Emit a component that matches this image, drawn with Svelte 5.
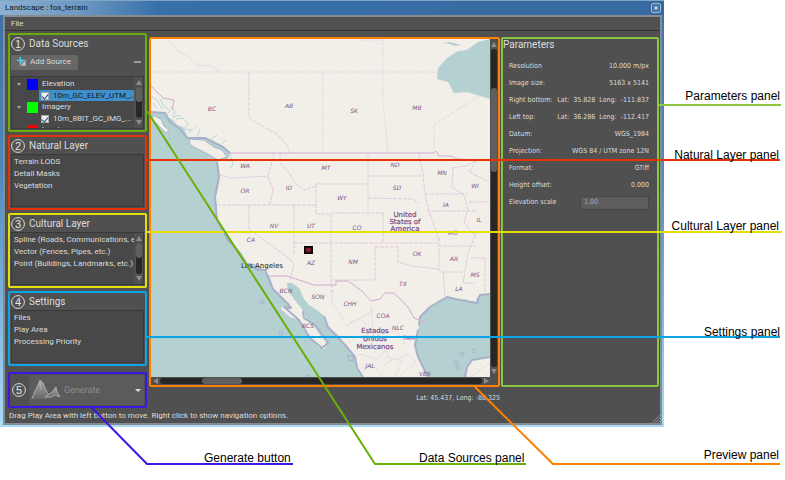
<script lang="ts">
    let selected = $state("10m_GC_ELEV_UTM_...");
    let elevationScale = $state("1.00");

    let sources = $state([
        { name: "Elevation", kind: "elevation", file: "10m_GC_ELEV_UTM_...", enabled: true },
        { name: "Imagery", kind: "imagery", file: "10m_8BIT_GC_IMG_...", enabled: true },
        { name: "Landcover", kind: "landcover", file: "", enabled: false },
    ]);

    const layers = [
        { no: 2, title: "Natural Layer", kind: "natural", items: ["Terrain LODS", "Detail Masks", "Vegetation"] },
        {
            no: 3,
            title: "Cultural Layer",
            kind: "cultural",
            items: ["Spline (Roads, Communications, etc.)", "Vector (Fences, Pipes, etc.)", "Point (Buildings, Landmarks, etc.)"],
        },
        { no: 4, title: "Settings", kind: "settings", items: ["Files", "Play Area", "Processing Priority"] },
    ];

    const parameters = [
        ["Resolution", "10.000 m/px"],
        ["Image size:", "5163 x 5141"],
        ["Right bottom:", "Lat:  35.828  Long:  -111.837"],
        ["Left top:", "Lat:  36.286  Long:  -112.417"],
        ["Datum:", "WGS_1984"],
        ["Projection:", "WGS 84 / UTM zone 12N"],
        ["Format:", "GTiff"],
        ["Height offset:", "0.000"],
    ];

    const states: [string, number, number][] = [
        ["BC", 212, 111], ["AB", 289, 108], ["SK", 354, 113], ["MB", 417, 110],
        ["WA", 245, 168], ["OR", 245, 193], ["ID", 289, 190], ["MT", 326, 170],
        ["ND", 395, 167], ["SD", 397, 190], ["WY", 342, 200], ["MN", 442, 175],
        ["WI", 475, 188], ["IA", 446, 207], ["IL", 479, 222], ["MO", 453, 235],
        ["NV", 274, 228], ["UT", 311, 228], ["CA", 251, 242], ["CO", 357, 230],
        ["AZ", 311, 265], ["NM", 353, 264], ["OK", 417, 256], ["AR", 454, 261],
        ["TX", 403, 286], ["MS", 475, 277], ["LA", 459, 291], ["BCN", 286, 293],
        ["SON", 318, 299], ["BCS", 308, 328], ["CHH", 350, 306], ["COA", 383, 318],
        ["NLC", 398, 330], ["TAM", 409, 340], ["JAL", 370, 368], ["VER", 425, 376],
    ];

    // offsets in px from the right edge (or the left one) and from the top of the figure
    const callouts = [
        { text: "Parameters panel", side: "right", x: 5, y: 88 },
        { text: "Natural Layer panel", side: "right", x: 6, y: 147 },
        { text: "Cultural Layer panel", side: "right", x: 6, y: 218 },
        { text: "Settings panel", side: "right", x: 5, y: 324 },
        { text: "Preview panel", side: "right", x: 6, y: 447 },
        { text: "Data Sources panel", side: "left", x: 419, y: 450 },
        { text: "Generate button", side: "left", x: 204, y: 450 },
    ];
</script>

{#snippet badge(no: number)}
    <svg class="badge" viewBox="0 0 14 14" aria-hidden="true">
        <circle cx="7" cy="7" r="6.4" />
        <text x="7" y="11">{no}</text>
    </svg>
{/snippet}

{#snippet scrollbar(kind: string)}
    <div class="scrollbar {kind}" aria-hidden="true">
        <i class="arrow back"></i>
        <div class="track"><div class="thumb"></div></div>
        <i class="arrow forward"></i>
    </div>
{/snippet}

<div class="figure">
    <div class="window">
        <header class="titlebar">
            <span class="title">Landscape : fox_terrain</span>
            <button class="close" aria-label="Close">
                <svg viewBox="0 0 8 8"><path d="M2.5 2.5l3 3M5.5 2.5l-3 3" /></svg>
            </button>
        </header>

        <div class="client">
            <nav class="menubar"><button>File</button></nav>

            <main class="main">
                <div class="sidebar">
                    <section class="panel sources">
                        <h2>{@render badge(1)}Data Sources</h2>
                        <div class="toolbar">
                            <button class="add">
                                <svg viewBox="0 0 12 12" aria-hidden="true">
                                    <path d="M3 3h8v8H3z" fill="#8b9296" />
                                    <path d="M5 10l5-5v5z" fill="#c4c8ca" />
                                    <path d="M4 0v8M0 4h8" stroke="#4fd0f5" stroke-width="1.6" />
                                </svg>
                                Add Source
                            </button>
                            <button class="collapse" aria-label="Collapse all"></button>
                        </div>
                        <div class="list">
                            <div class="tree">
                                {#each sources as source}
                                    <div class="group"><i class="twisty"></i><i class="swatch {source.kind}"></i>{source.name}</div>
                                    {#if source.file}
                                        <label class="file" class:selected={source.file === selected}>
                                            <input type="checkbox" bind:checked={source.enabled} />
                                            {source.file}
                                        </label>
                                    {/if}
                                {/each}
                            </div>
                            {@render scrollbar("vertical")}
                        </div>
                    </section>

                    {#each layers as layer}
                        <section class="panel {layer.kind}">
                            <h2>{@render badge(layer.no)}{layer.title}</h2>
                            <div class="list">
                                <ul>
                                    {#each layer.items as item}
                                        <li>{item}</li>
                                    {/each}
                                </ul>
                                {#if layer.kind === "cultural"}
                                    {@render scrollbar("vertical")}
                                {/if}
                            </div>
                        </section>
                    {/each}

                    <section class="panel run">
                        {@render badge(5)}
                        <button class="generate">
                            <svg viewBox="0 0 30 22" aria-hidden="true">
                                <defs>
                                    <linearGradient id="rock" x2="0" y2="1">
                                        <stop offset="0" stop-color="#aaa" />
                                        <stop offset="1" stop-color="#666" />
                                    </linearGradient>
                                </defs>
                                <path d="M1 20L4 12 6 8 9 1 12 4 14 9 16 13 19 18 15 20z" fill="url(#rock)" />
                                <path d="M1 20L4 12 6 8 9 1 12 4 14 9 16 13 19 18M9 2l1 6-1 3" fill="none" stroke="#aaa" />
                                <path d="M14 18L17 16 20 14 22 12 25 8 26 13 29 18 24 16 20 18z" fill="url(#rock)" stroke="#aaa" />
                            </svg>
                            Generate
                            <i class="caret"></i>
                        </button>
                    </section>
                </div>

                <div class="center">
                    <section class="preview" aria-label="Preview">
                        <svg class="map" viewBox="151 39 339 338" preserveAspectRatio="xMidYMid slice">
                            <g class="water">
                                <path d="M151 112L165 113 168 117 173 120 177 125 183 127 188 137 205 138 214 142 223 147 230 153 228 159 217 162 219 177 218 188 215 197 217 207 217 220 220 227 225 233 228 240 240 253 245 262 255 264 263 268 270 277 273 289 280 297 289 303 292 308 287 310 282 306 281 309 290 317 299 320 304 329 310 337 318 347 324 349 328 344 320 335 314 326 307 320 302 309 294 299 288 291 287 283 292 283 299 288 304 299 309 305 317 310 324 316 328 327 338 335 346 346 355 357 357 368 363 377 151 377z" />
                                <path d="M419 325L420 317 430 307 440 300 447 297 460 300 466 299 468 302 477 303 476 299 480 295 490 294 490 357 472 360 467 367 465 377 428 377 424 370 418 357 415 345 417 335z" />
                            </g>
                            <path class="shelf" d="M151 112L165 113 170 122 180 129 187 138 205 138 223 147 230 153M217 162L219 177 215 197 217 220 228 240 240 253 247 264 258 270 265 270 273 289 287 303 291 308 284 307 299 320 310 338 322 348 328 343 316 326 304 318 303 311M324 316L328 327 346 346 355 357 357 368 363 377M419 325L420 317 430 307 447 297 460 300 477 303 480 295 490 294M490 357L472 360 467 367 465 377M428 377L418 357 415 345 418 330" />
                            <path class="bay" d="M490 39L478 42 467 50 458 51 447 58 438 68 437 79 448 82 454 93 467 92 480 96 490 99z" />
                            <path class="bay" d="M443 43l7-1 11 3-6 1-5-2z" />
                            <path class="island" d="M189 139L204 140 214 147 222 150 227 157 218 160 208 154 190 145z" />
                            <path class="island" d="M152 115L161 119 164 126 169 130 166 133 153 120z" />
                            <path class="fjords" d="M151 96l6 4 5 9M160 99l4 7 6 5-3 3M170 106l5 5-2 6 8-2M176 119l7-1 5 6-4 5 8 1M153 103l4 5M188 133l8-6M197 137l3-8M210 140l7-5M220 145l6-5M230 154l3 10-3 4" />
                            <g class="coastline">
                                <circle cx="262" cy="302" r="2" /><circle cx="281" cy="333" r="2" />
                                <circle cx="474" cy="351" r="2" /><circle cx="462" cy="354" r="2" />
                                <circle cx="456" cy="363" r="2" /><circle cx="458" cy="368" r="2" />
                                <circle cx="308" cy="377" r="2" /><path d="M347 355l5 1 2 5-5-1z" />
                            </g>
                            <path class="borders faint" d="M151 72H437M167 40l6 5 5 6 10 5 9 9 15 1 8 6M323 72V153M360 40H383V103L388 153M434 125L479 96M434 125V153" />
                            <path class="borders" d="M249 72V118L262 126 277 134 287 145 290 153M219 175l12 3 37-2 6-22M268 177l5 12-3 16M280 153v10l10 11 5 9 9 7 12-4M217 205H316M316 184v30h15V293M316 184h52M368 154v57M331 213h52M368 176h53M368 198l45 1 6 5M419 154l4 20 2 20 4 17 5 14 5 15M425 194h42M427 211h50M383 213v29M249 205v24l42 31 3 6-4 14M294 205v50M294 243H438M375 247v33H332M375 247h23v15l14 4 27 3M439 238v32l4 2 2 25M443 272h20M438 246h38M477 231l-9 22-5 30h12M471 258h15M485 258v35M453 168l13-2 9-5M453 168l-1 19 12 8 4 15-4 12 11 14M477 160l-8 12 20 10M469 202h21" />
                            <path class="borders faint" d="M333 284l-1 19 12 17M346 326l28-16M371 304l2 25-10 14M350 322l10-3 10 10 13 4 14-2 8 14M367 345l10-5 11 10M359 354l18 5 8-9 7 11-10 5M363 368l10-3 10 12M385 357l17 4-7 16M397 360l11-6 10 12M402 373l12-8M470 377l20-14" />
                            <path class="national" d="M228 153H434L436 151 439 156 450 156 458 159 478 160M151 86l12 12 11 2-2 10M270 276h17l27 9h22v-4h12l14 10 9 10 9-2 5-6h9l14 14 6 11 13 5" />

                            <g class="states">
                                {#each states as [name, x, y]}
                                    <text {x} {y}>{name}</text>
                                {/each}
                            </g>
                            <g class="countries">
                                <text x="405" y="217">United</text>
                                <text x="405" y="224">States of</text>
                                <text x="405" y="231">America</text>
                                <text x="375" y="333">Estados</text>
                                <text x="375" y="341">Unidos</text>
                                <text x="375" y="349">Mexicanos</text>
                            </g>
                            <text class="city" x="262" y="268">Los Angeles</text>
                            <rect class="play-area" x="305" y="247" width="7" height="6" />
                            <rect class="play-grid" x="306" y="248" width="5" height="4" />
                        </svg>
                        {@render scrollbar("vertical tall")}
                        {@render scrollbar("horizontal")}
                    </section>
                    <p class="coords">Lat: 45.437, Long: -88.325</p>
                </div>

                <section class="params">
                    <h2>Parameters</h2>
                    <dl>
                        {#each parameters as [name, value]}
                            <div><dt>{name}</dt><dd>{value}</dd></div>
                        {/each}
                    </dl>
                    <label class="scale">
                        Elevation scale
                        <input type="text" bind:value={elevationScale} />
                    </label>
                </section>
            </main>

            <footer class="status">
                Drag Play Area with left button to move. Right click to show navigation options.
                <svg class="grip" viewBox="0 0 8 8" aria-hidden="true"><path d="M0 8L8 0M3 8l5-5M6 8l2-2" /></svg>
            </footer>
        </div>
    </div>

    <svg class="leaders" viewBox="0 0 785 480" preserveAspectRatio="none" aria-hidden="true">
        <path class="parameters" d="M658 105H781" />
        <path class="natural" d="M147 160H780" />
        <path class="cultural" d="M147 232H782" />
        <path class="settings" d="M147 337H780" />
        <path class="preview-line" d="M475 387L553 464H780" />
        <path class="sources" d="M147 111L375 464H526" />
        <path class="run-line" d="M92 408L147 464H293" />
    </svg>
    {#each callouts as callout}
        <span class="callout" style="{callout.side}: {callout.x}px; top: {callout.y}px">{callout.text}</span>
    {/each}
</div>

<style>
    :global(body) {
        background: #fff;
    }

    .figure {
        position: relative;
        padding: 0 121px 53px 0;
        font: 8px/12px Roboto, "Open Sans", sans-serif;
        color: #ddd;
    }

    .figure * {
        box-sizing: border-box;
    }

    button {
        padding: 0;
        border: 0;
        background: none;
        font: inherit;
        color: inherit;
    }

    .window {
        padding: 0 2px 2px 3px;
        background: linear-gradient(#3d70a6, #4e88bd 40%, #a9dcf8);
    }

    .titlebar {
        display: flex;
        align-items: center;
        justify-content: space-between;
        height: 15px;
        background: linear-gradient(90deg, #8cb0d0, #6c98c2 80px, #376fa8 160px, #376aa0);
        border-top: 1px solid #7fa6c9;
        margin: 0 -2px 0 -3px;
        padding: 0 3px 0 5px;
    }

    .title {
        color: #101820;
    }

    .close {
        display: grid;
        place-items: center;
        width: 10px;
        height: 10px;
        border: 1px solid #9dbbd6;
        border-radius: 2px;
        background: #4a76a5;
    }

    .close svg {
        width: 8px;
        height: 8px;
        stroke: #fff;
    }

    .client {
        border: 2px solid #858c92;
        background: #505050;
    }

    .menubar {
        height: 14px;
        padding-left: 6px;
        border-bottom: 1px solid #333;
        display: flex;
        align-items: center;
    }

    .main {
        display: grid;
        grid-template-columns: 139px 1fr 158px;
        padding: 2px 1px 0 3px;
    }

    .sidebar {
        display: flex;
        flex-direction: column;
        gap: 3px;
    }

    .panel {
        border: 2px solid var(--accent);
        border-radius: 2px;
        padding: 1px;
    }

    .sources {
        --accent: #6aaf08;
    }

    .natural {
        --accent: #e63206;
    }

    .cultural {
        --accent: #e5df05;
    }

    .settings {
        --accent: #0ba4e6;
    }

    .run,
    .run-line {
        --accent: #3b18ea;
    }

    .parameters {
        --accent: #8cc63f;
    }

    .preview-line {
        --accent: #ff7f00;
    }

    h2 {
        display: flex;
        align-items: center;
        gap: 4px;
        height: 16px;
        margin: 0;
        font-size: 10px;
        font-weight: 400;
    }

    .badge {
        flex: none;
        width: 14px;
        height: 14px;
        font: 11px "Liberation Sans", sans-serif;
        text-anchor: middle;
        fill: #e6e6e6;
    }

    .badge circle {
        fill: none;
        stroke: #ddd;
    }

    .toolbar {
        display: flex;
        align-items: center;
        justify-content: space-between;
        height: 20px;
        margin-bottom: 4px;
        padding-right: 3px;
    }

    .add {
        display: flex;
        align-items: center;
        gap: 3px;
        height: 15px;
        padding: 0 7px 0 6px;
        border-radius: 1px;
        background: #676767;
    }

    .add svg {
        width: 10px;
        height: 10px;
    }

    .collapse {
        width: 7px;
        height: 2px;
        background: #999;
    }

    .list {
        display: flex;
        height: 53px;
        border: 1px solid #393939;
        background: #484848;
        overflow: hidden;
    }

    .tree,
    ul {
        flex: 1;
        min-width: 0;
        margin: 0;
        padding: 1px 0 0;
        overflow: hidden;
        white-space: nowrap;
        list-style: none;
    }

    ul {
        padding-left: 2px;
    }

    .group,
    .file {
        display: flex;
        align-items: center;
        height: 12px;
    }

    .file {
        height: 11px;
        margin-left: 27px;
        padding-left: 2px;
        gap: 4px;
    }

    .selected {
        background: #3f8fcb;
        color: #101820;
    }

    .file input {
        appearance: none;
        width: 8px;
        height: 8px;
        margin: 0;
        background: #eee;
        border: 1px solid #aaa;
    }

    .file input:checked::after {
        content: "";
        display: block;
        width: 3px;
        height: 5px;
        margin: 0 1px;
        border: solid #25476d;
        border-width: 0 1px 1px 0;
        transform: rotate(40deg);
    }

    .twisty,
    .caret {
        border: 3px solid transparent;
        border-top: 3px solid #aaa;
        border-bottom: 0;
    }

    .twisty {
        border-width: 3px 2px 0;
        margin: 0 6px 0 5px;
    }

    .swatch {
        width: 11px;
        height: 11px;
        margin-right: 4px;
    }

    .elevation {
        background: #00f;
    }

    .imagery {
        background: #0f0;
    }

    .landcover {
        background: #f00;
    }

    .scrollbar {
        display: flex;
        align-items: center;
        gap: 2px;
    }

    .vertical {
        flex-direction: column;
        width: 9px;
        padding: 3px 1px;
        background: #505050;
    }

    .arrow {
        flex: none;
        border: 3px solid transparent;
    }

    .vertical .back {
        border-top: 0;
        border-bottom: 5px solid #8c8c8c;
    }

    .vertical .forward {
        border-bottom: 0;
        border-top: 5px solid #8c8c8c;
    }

    .horizontal .back {
        border-left: 0;
        border-right: 5px solid #8c8c8c;
    }

    .horizontal .forward {
        border-right: 0;
        border-left: 5px solid #8c8c8c;
    }

    .track {
        flex: 1;
        width: 6px;
        border-radius: 3px;
        background: #272727;
    }

    .thumb {
        width: 100%;
        height: 48%;
        border-radius: 3px;
        background: #5f5f5f;
    }

    .tall .track {
        padding-top: 39px;
    }

    .tall .thumb {
        height: 84px;
    }

    .horizontal .track {
        height: 6px;
        padding-left: 42px;
    }

    .horizontal .thumb {
        width: 40px;
        height: 6px;
    }

    .run {
        display: flex;
        align-items: center;
        gap: 3px;
        height: 36px;
        margin-top: 3px;
        padding-left: 2px;
    }

    .generate {
        flex: 1;
        display: flex;
        align-items: center;
        gap: 3px;
        height: 30px;
        padding: 0 3px 0 2px;
        background: #5b5b5b;
        font-size: 9px;
        color: #8e8e8e;
    }

    .generate svg {
        width: 30px;
        height: 22px;
    }

    .caret {
        margin-left: auto;
        border-top-color: #ddd;
    }

    .center {
        padding: 4px 1px 0 2px;
    }

    .preview {
        display: grid;
        grid-template-columns: 1fr 8px;
        border: 2px solid #ff7f00;
        border-radius: 2px;
    }

    .map {
        display: block;
        width: 100%;
        height: 338px;
        background: #f2efe9;
    }

    .tall {
        width: 8px;
    }

    .horizontal {
        height: 8px;
        padding: 0 9px 0 2px;
        grid-column: span 2;
    }

    .water,
    .bay {
        fill: #b5d0d0;
    }

    .shelf {
        fill: none;
        stroke: #aab0cb;
        stroke-width: 2;
        stroke-linejoin: round;
    }

    .island {
        fill: #f2efe9;
        stroke: #a9b6cc;
    }

    .fjords {
        fill: none;
        stroke: #bad7d7;
    }

    .coastline {
        fill: none;
        stroke: #a9b1cd;
    }

    .borders {
        fill: none;
        stroke: #e0c9dd;
        stroke-dasharray: 4 1;
    }

    .faint {
        stroke: #e6d9e2;
    }

    .national {
        fill: none;
        stroke: #d2abd2;
    }

    .map text {
        text-anchor: middle;
    }

    .states {
        font: italic 6px "DejaVu Sans", sans-serif;
        fill: #7d5586;
    }

    .countries {
        font: 7px "DejaVu Sans", sans-serif;
        fill: #774b83;
        stroke: #774b83;
        stroke-width: 0.2;
    }

    .city {
        font: 7px "DejaVu Sans", sans-serif;
        fill: #222;
    }

    .play-area {
        fill: #a3182c;
        stroke: #000;
        stroke-width: 2;
    }

    .play-grid {
        fill: none;
        stroke: #54101a;
    }

    .coords {
        margin: 5px 0 0;
        text-align: right;
        font: 7px/12px "DejaVu Sans Condensed", "DejaVu Sans", sans-serif;
    }

    .params {
        align-self: start;
        min-height: 350px;
        margin-top: 4px;
        border: 2px solid #8cc63f;
        border-radius: 2px;
        font: 7px/17px "DejaVu Sans Condensed", "DejaVu Sans", sans-serif;
    }

    .params h2 {
        height: 10px;
        font-family: Roboto, "Open Sans", sans-serif;
    }

    dl {
        margin: 9px 8px 0 6px;
    }

    dl div {
        display: flex;
        justify-content: space-between;
        white-space: pre;
    }

    dd {
        margin: 0;
    }

    .scale {
        display: flex;
        align-items: center;
        justify-content: space-between;
        margin: 0 8px 0 6px;
    }

    .scale input {
        width: 69px;
        height: 14px;
        padding: 0 3px;
        border: 1px solid #444;
        border-radius: 1px;
        background: #5d5d5d;
        font: inherit;
        color: #aaa;
    }

    .status {
        display: flex;
        justify-content: space-between;
        align-items: center;
        height: 15px;
        padding-left: 4px;
    }

    .grip {
        align-self: end;
        width: 8px;
        height: 8px;
        stroke: #8c8c8c;
    }

    .leaders {
        position: absolute;
        inset: 0;
        width: 100%;
        height: 100%;
        pointer-events: none;
    }

    .leaders path {
        fill: none;
        stroke: var(--accent);
        stroke-width: 2;
        vector-effect: non-scaling-stroke;
    }

    .callout {
        position: absolute;
        font: 12px/16px "Liberation Sans", Arial, sans-serif;
        color: #000;
        white-space: nowrap;
    }
</style>
